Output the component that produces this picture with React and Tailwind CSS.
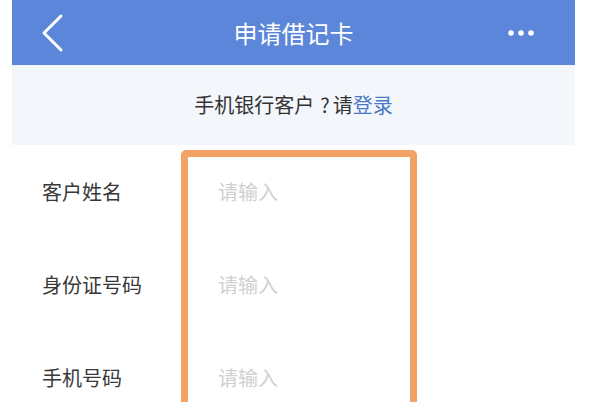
export default function App() {
  const rows = ['客户姓名', '身份证号码', '手机号码'];
  return (
    <div className="h-screen w-full bg-white overflow-hidden" style={{ fontFamily: '"Noto Sans CJK SC", "Noto Sans", sans-serif' }}>
      <div className="ml-[12px] w-[563px]">
        {/* header */}
        <div className="h-[65px] bg-[#5b86d9] grid grid-cols-[1fr_auto_1fr] items-center">
          <svg width="30" height="40" viewBox="0 0 30 40" className="ml-[25px]">
            <path d="M24 3 L7 20 L24 37" fill="none" stroke="#fff" strokeWidth="3" strokeLinecap="round" strokeLinejoin="round" />
          </svg>
          <h1 className="text-[24px] text-white leading-none">申请借记卡</h1>
          <svg width="30" height="10" viewBox="0 0 30 10" className="justify-self-end mr-[38px]">
            <circle cx="4" cy="5" r="2.8" fill="#fff" />
            <circle cx="14" cy="5" r="2.8" fill="#fff" />
            <circle cx="24" cy="5" r="2.8" fill="#fff" />
          </svg>
        </div>

        {/* login hint */}
        <div className="h-[80px] bg-[#f3f7fc] flex items-center justify-center">
          <p className="text-[20px] text-[#333] leading-none">
            手机银行客户<span className="pl-[6px] pr-[3px]">?</span>请<span className="text-[#4a78c4]">登录</span>
          </p>
        </div>

        {/* form */}
        <div className="relative h-[257px] overflow-hidden">
          {rows.map((r) => (
            <div key={r} className="h-[93px] flex items-center">
              <span className="w-[206px] pl-[30px] text-[20px] text-[#383838] leading-none">{r}</span>
              <span className="text-[20px] text-[#d0d0d0] leading-none">请输入</span>
            </div>
          ))}
          <div className="absolute left-[169px] top-[5px] w-[236px] h-[320px] border-[7px] border-[#f2a264] rounded-[5px]"></div>
        </div>
      </div>
    </div>
  );
}
